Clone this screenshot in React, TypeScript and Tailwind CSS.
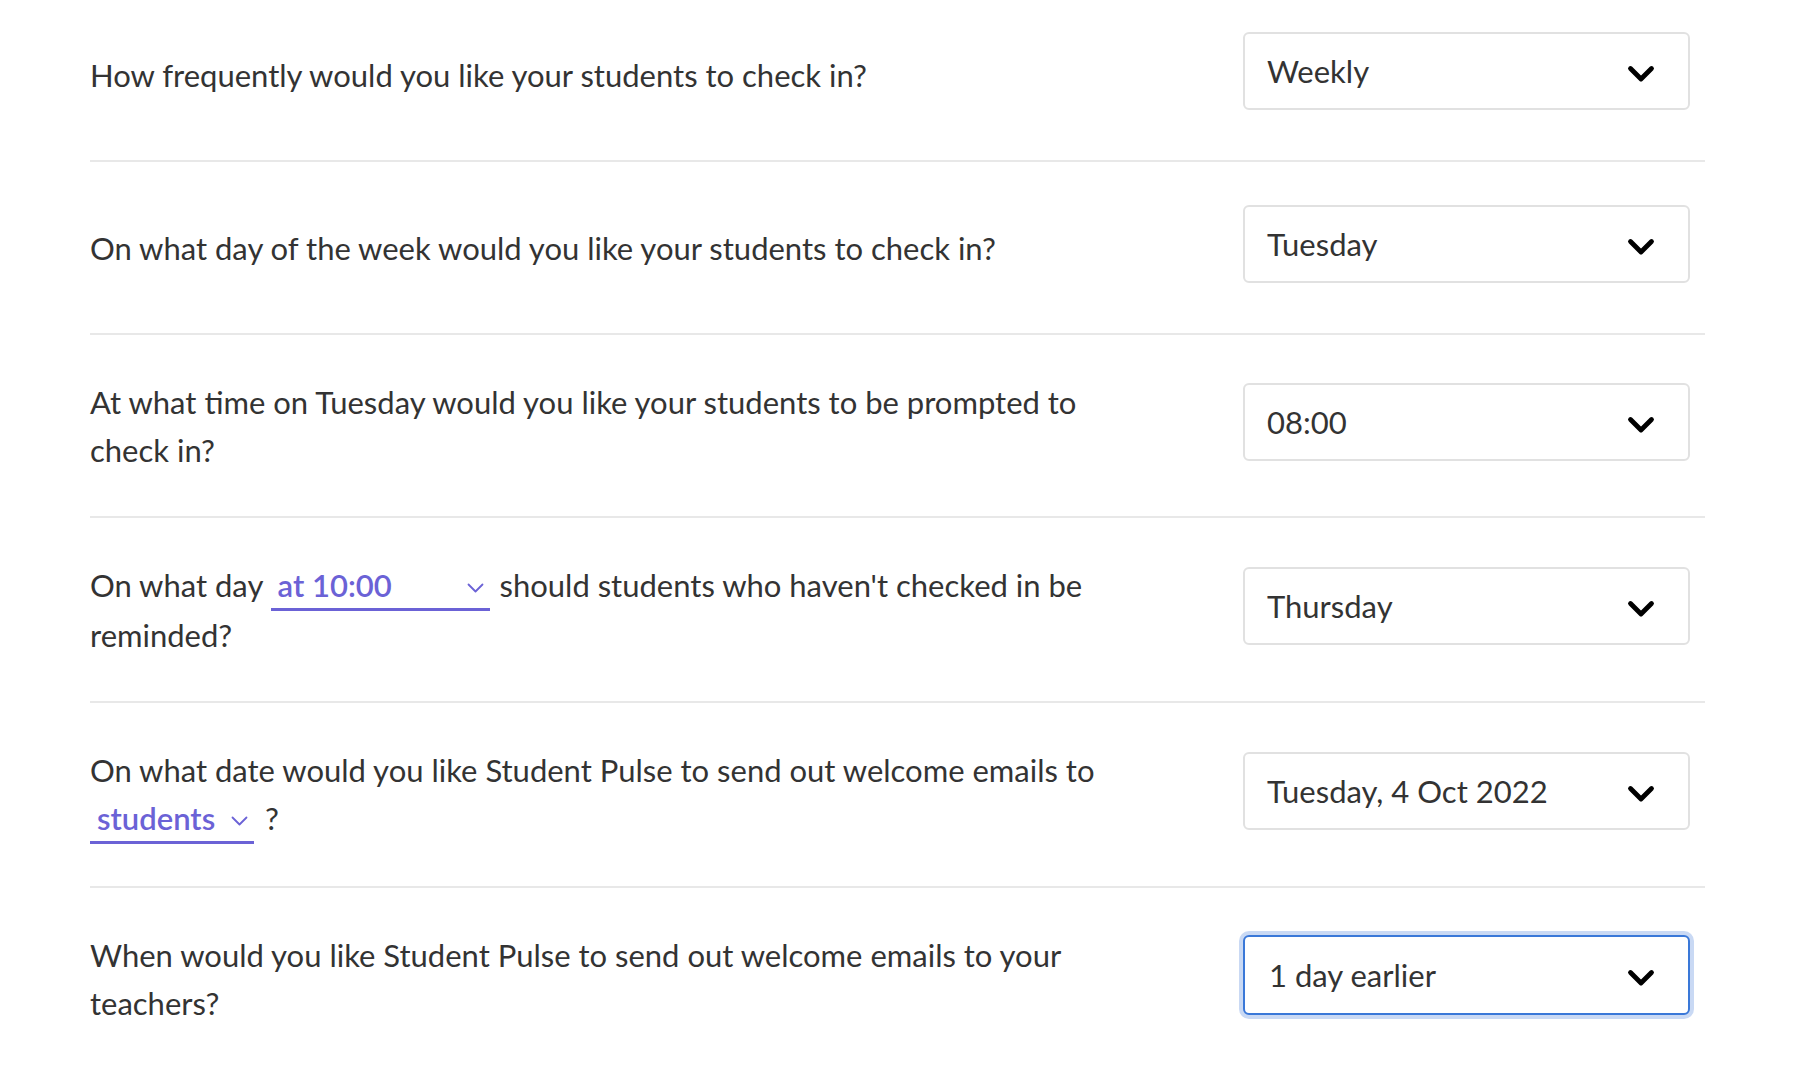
import React from "react";

const FONT = { fontFamily: "Lato, 'Noto Sans', sans-serif" };

function BigChevron() {
  return (
    <svg width="28" height="18" viewBox="0 0 28 18" className="mt-[6px] shrink-0">
      <path d="M3.5 3.5 L14 14 L24.5 3.5" fill="none" stroke="#000" strokeWidth="4.8" strokeLinecap="round" strokeLinejoin="round" />
    </svg>
  );
}

function SmallChevron() {
  return (
    <svg width="17" height="10" viewBox="0 0 17 10" className="mt-[6px] shrink-0">
      <path d="M1.5 1.5 L8.5 8.5 L15.5 1.5" fill="none" stroke="#6b62d6" strokeWidth="1.8" strokeLinecap="round" strokeLinejoin="round" />
    </svg>
  );
}

function Dropdown({ value, focused = false }: { value: string; focused?: boolean }) {
  return (
    <div
      className={
        focused
          ? "w-[447px] h-[80px] mb-2 shrink-0 rounded-[6px] border-2 border-[#3a78d8] shadow-[0_0_0_4px_#c9d9f4] flex items-center justify-between pl-[24px] pr-[33px] bg-white"
          : "w-[447px] h-[78px] mb-2 shrink-0 rounded-[6px] border-2 border-[#e1e1e1] flex items-center justify-between pl-[22px] pr-[33px] bg-white"
      }
    >
      <span className="text-[31px] leading-[37px] text-[#333333]">{value}</span>
      <BigChevron />
    </div>
  );
}

function InlineSelect({ value, width }: { value: string; width: string }) {
  return (
    <span
      className={`${width} inline-flex items-center justify-between border-b-[3px] border-[#6b62d6] pl-[7px] pr-[6px] pb-[4px] align-baseline`}
    >
      <span className="text-[31px] leading-[38px] font-semibold text-[#6b62d6]">{value}</span>
      <SmallChevron />
    </span>
  );
}

function Row({
  children,
  value,
  focused,
  first,
  last,
}: {
  children: React.ReactNode;
  value: string;
  focused?: boolean;
  first?: boolean;
  last?: boolean;
}) {
  return (
    <div
      className={`flex items-center justify-between pr-[15px] ${first ? "pt-[32px]" : "pt-[43px]"} pb-[42px] ${
        last ? "" : "border-b-2 border-[#e8e8e8]"
      }`}
    >
      <div className="w-[1070px] text-[31px] leading-[48px] text-[#333333]">{children}</div>
      <Dropdown value={value} focused={focused} />
    </div>
  );
}

export default function App() {
  return (
    <div className="min-h-[1066px] bg-white" style={FONT}>
      <div className="ml-[90px] w-[1615px]">
        <Row value="Weekly" first>
          How frequently would you like your students to check in?
        </Row>
        <Row value="Tuesday">On what day of the week would you like your students to check in?</Row>
        <Row value="08:00">
          At what time on Tuesday would you like your students to be prompted to check in?
        </Row>
        <Row value="Thursday">
          On what day <InlineSelect value="at 10:00" width="w-[219px] mr-[2px]" /> should students who
          haven't checked in be reminded?
        </Row>
        <Row value="Tuesday, 4 Oct 2022">
          On what date would you like Student Pulse to send out welcome emails to{" "}
          <InlineSelect value="students" width="w-[164px] mr-[3px]" /> ?
        </Row>
        <Row value="1 day earlier" focused last>
          When would you like Student Pulse to send out welcome emails to your teachers?
        </Row>
      </div>
    </div>
  );
}
